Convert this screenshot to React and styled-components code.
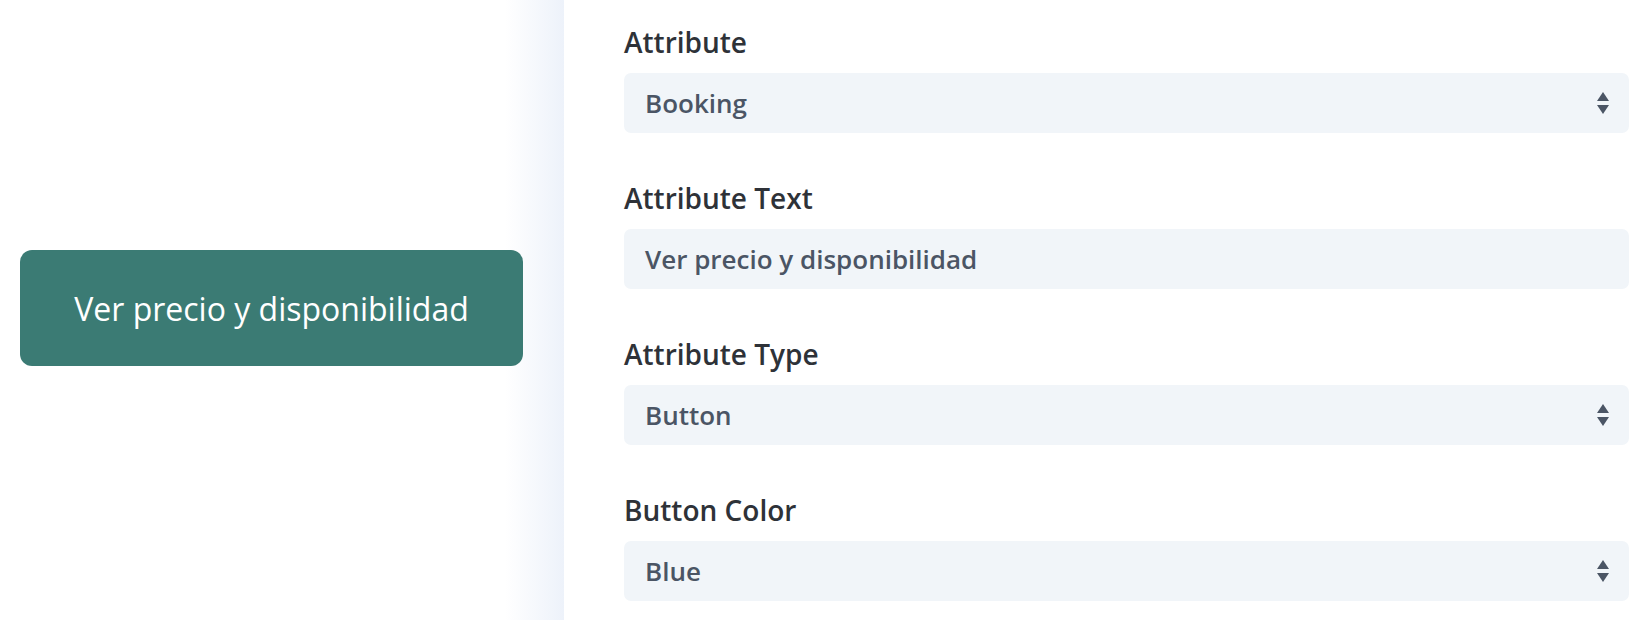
import React from 'react';
import styled, { createGlobalStyle } from 'styled-components';

const GlobalStyle = createGlobalStyle`
	html, body {
		margin: 0;
		padding: 0;
		background: #fff;
		font-family: 'Open Sans', 'Noto Sans', sans-serif;
	}
`;

const Page = styled.div`
	display: flex;
	width: 1648px;
	height: 620px;
	overflow: hidden;
`;

const Preview = styled.div`
	flex: 0 0 564px;
	display: flex;
	align-items: center;
	padding: 0 41px 4px 20px;
	box-sizing: border-box;
	background: linear-gradient(to right, #fff 0, #fff 505px, #edf2fa 100%);
`;

const CtaButton = styled.button`
	width: 100%;
	height: 116px;
	border: none;
	border-radius: 12px;
	background: #3b7b74;
	color: #fff;
	font-family: 'Open Sans', sans-serif;
	font-size: 32px;
	font-weight: 400;
	cursor: pointer;
`;

const Settings = styled.div`
	flex: 1;
	display: flex;
	flex-direction: column;
	gap: 47px;
	padding: 24px 19px 0 60px;
`;

const Field = styled.div`
	display: flex;
	flex-direction: column;
`;

const Label = styled.label`
	font-size: 28px;
	line-height: 36px;
	font-weight: 600;
	color: #2e3238;
	margin-bottom: 13px;
`;

const Control = styled.div`
	display: flex;
	align-items: center;
	justify-content: space-between;
	height: 60px;
	padding: 0 20px 0 21px;
	border-radius: 7px;
	background: #f1f5f9;
	color: #4b5565;
	font-size: 26px;
	font-weight: 600;
`;

const Arrows = () => (
	<svg width="12" height="23" viewBox="0 0 12 23">
		<path d="M6 0 L12 9 L0 9 Z" fill="#4b5565" />
		<path d="M0 13 L12 13 L6 22 Z" fill="#4b5565" />
	</svg>
);

const fields = [
	{ label: 'Attribute', value: 'Booking', select: true },
	{ label: 'Attribute Text', value: 'Ver precio y disponibilidad' },
	{ label: 'Attribute Type', value: 'Button', select: true },
	{ label: 'Button Color', value: 'Blue', select: true },
];

export default function App() {
	return (
		<Page>
			<GlobalStyle />
			<Preview>
				<CtaButton>Ver precio y disponibilidad</CtaButton>
			</Preview>
			<Settings>
				{fields.map((f) => (
					<Field key={f.label}>
						<Label>{f.label}</Label>
						<Control>
							<span>{f.value}</span>
							{f.select && <Arrows />}
						</Control>
					</Field>
				))}
			</Settings>
		</Page>
	);
}
